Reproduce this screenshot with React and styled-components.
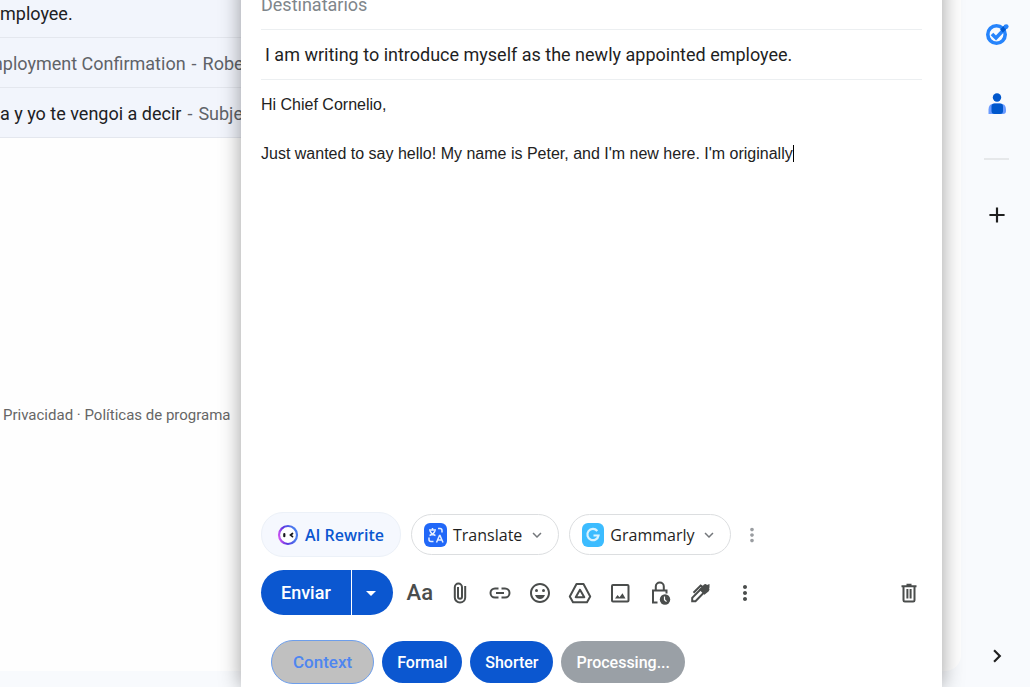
import React from "react";
import styled, { createGlobalStyle, css } from "styled-components";
import { MdArrowDropDown, MdMoreVert, MdAdd, MdChevronRight, MdOutlineEmojiEmotions, MdExpandMore } from "react-icons/md";

const Global = createGlobalStyle`
  *, *::before, *::after { box-sizing: border-box; }
  body {
    margin: 0;
    overflow: hidden;
    background: #f8fafd;
    font-family: Roboto, "Liberation Sans", sans-serif;
    color: #1f1f1f;
  }
  button { font: inherit; cursor: pointer; }
`;

const Page = styled.div`
  position: relative;
  display: grid;
  grid-template-columns: minmax(0, 1fr) 69px;
  height: 100vh;
  overflow: hidden;
`;

const Mailbox = styled.main`
  margin-bottom: 16px;
  background: #fefefe;
  border-bottom-right-radius: 16px;
  overflow: hidden;
`;

const MailList = styled.ul`
  list-style: none;
  margin: -12px 24px 0 0;
  padding: 0;
`;

const MailRow = styled.li`
  display: flex;
  align-items: center;
  height: 50px;
  padding-top: 2px;
  border-bottom: 1px solid #e4e7ee;
  background: #f2f5fc;
  white-space: pre;
  font-size: 18px;
  color: #5f6368;
  text-indent: ${(p) => (p.$clipped ? "-13px" : "0")};
`;

const MailSubject = styled.span`
  color: #202124;
`;

const Dash = styled.span`
  padding: 0 6px;
  text-indent: 0;
`;

const Snippet = styled.span`
  text-indent: 0;
`;

const Footer = styled.footer`
  margin-top: 265px;
  padding-left: 3px;
  font-size: 15px;
  line-height: 24px;
  color: #666;
  a { color: inherit; text-decoration: none; }
`;

const Rail = styled.aside`
  display: flex;
  flex-direction: column;
  align-items: center;
  padding: 21px 0 18px 2px;
`;

const RailButton = styled.button`
  display: grid;
  place-items: center;
  width: 26px;
  height: 26px;
  padding: 0;
  border: 0;
  background: none;
  color: #1f1f1f;
  margin-top: ${(p) => p.$gap || 0}px;
`;

const RailRule = styled.hr`
  width: 25px;
  height: 2px;
  margin: 41px 0 0;
  border: 0;
  background: #e6e8ea;
`;

const RailSpacer = styled.div`
  flex: 1;
`;

const Compose = styled.section`
  position: absolute;
  top: -20px;
  bottom: 0;
  right: 88px;
  left: 241px;
  display: flex;
  flex-direction: column;
  padding: 0 20px 3px;
  background: #fff;
  box-shadow: 0 0 20px rgba(0, 0, 0, 0.38);
`;

const Field = styled.input`
  flex: none;
  height: 50px;
  padding: 0 0 0 ${(p) => (p.$inset ? 4 : 0)}px;
  border: 0;
  border-bottom: 1px solid #eceff1;
  outline: 0;
  background: none;
  font: inherit;
  font-size: 18px;
  color: #1f1f1f;
  &::placeholder { color: #80868b; opacity: 1; }
`;

const Body = styled.div`
  flex: 1;
  padding-top: 13px;
  outline: 0;
  font-family: "Liberation Sans", Arial, sans-serif;
  font-size: 16px;
  line-height: 24px;
  color: #222;
  p { margin: 0 0 25px; }
`;

const Caret = styled.span`
  border-left: 1px solid #000;
`;

const AiBar = styled.div`
  display: flex;
  align-items: center;
  gap: 10px;
  margin-bottom: 13px;
  color: #9a9da1;
`;

const AiButton = styled.button`
  display: flex;
  align-items: center;
  gap: 6px;
  height: 41px;
  padding: 0 12px;
  border: 1px solid #dcdee0;
  border-radius: 22px;
  background: #fff;
  font-family: "Open Sans", "Noto Sans", sans-serif;
  font-size: 16px;
  color: #1f1f1f;
  ${(p) =>
    p.$primary &&
    css`
      height: 45px;
      padding: 0 16px 0 15px;
      border: 1px solid #ecf1f8;
      background: #f5f8fe;
      color: #0b57d0;
      font-weight: 600;
    `}
`;

const Toolbar = styled.div`
  display: flex;
  align-items: center;
  margin-bottom: 25px;
`;

const SendGroup = styled.div`
  display: flex;
  gap: 1px;
  margin-right: 12px;
`;

const SendButton = styled.button`
  display: grid;
  place-items: center;
  height: 45px;
  padding: 0 20px;
  border: 0;
  border-radius: 23px 0 0 23px;
  background: #0b57d0;
  color: #fff;
  font-size: 18px;
  font-weight: 500;
`;

const SendOptions = styled(SendButton)`
  width: 41px;
  padding: 0 2px 0 0;
  border-radius: 0 23px 23px 0;
`;

const ToolButton = styled.button`
  display: grid;
  place-items: center;
  width: 30px;
  height: 30px;
  margin-right: 10px;
  padding: 0;
  border: 0;
  background: none;
  color: #4a4d4c;
  font-size: 22px;
  font-weight: 500;
  &:last-child {
    width: 26px;
    margin: 0 0 0 auto;
  }
`;

const ToolGap = styled.span`
  width: 5px;
`;

const Chips = styled.div`
  display: flex;
  align-items: center;
  gap: 8px;
  padding-left: 10px;
`;

const chipTones = {
  solid: css`background: #0b57d0; color: #fff;`,
  busy: css`background: #9aa0a6; color: #fff;`,
  outline: css`
    height: 44px;
    padding: 0 21px;
    border: 1px solid #6d9eeb;
    background: #c0c0c0;
    color: #4e86f0;
    font-size: 17px;
  `,
};

const Chip = styled.button`
  height: 42px;
  padding: 0 15px;
  border: 0;
  border-radius: 22px;
  font-size: 16px;
  font-weight: 500;
  ${(p) => chipTones[p.$tone]}
`;

const stroke = { fill: "none", stroke: "currentColor", strokeWidth: 2 };

const TasksIcon = () => (
  <svg width="24" height="24" viewBox="0 0 24 24" fill="none">
    <circle cx="11.500" cy="12.500" r="8.700" stroke="#2684fc" strokeWidth="3.600" />
    <path d="M7 12l4 4 8.500-9" stroke="#2684fc" strokeWidth="3.600" />
    <path d="M16.500 9l4.500-4.500" stroke="#0057cc" strokeWidth="4" />
    <circle cx="21.200" cy="4.600" r="2.400" fill="#2684fc" />
  </svg>
);

const ContactsIcon = () => (
  <svg width="24" height="24" viewBox="0 0 24 24">
    <circle cx="12" cy="5.500" r="4.200" fill="#0057cc" />
    <path d="M3.500 22v-4.500q0-6 6-6H15q6 0 6 6V19q0 3-3 3z" fill="#6a9bff" />
    <path d="M6.500 19v-4.500q0-3 3-3H15q3 0 3 3V19q0 3-3 3H9.500q-3 0-3-3z" fill="#0057cc" />
  </svg>
);

const RobotIcon = () => (
  <svg width="22" height="22" viewBox="0 0 22 22">
    <defs>
      <linearGradient id="ring" x1="0" y1="0.800" x2="0.900" y2="0.600">
        <stop offset="0" stopColor="#d85af5" />
        <stop offset="0.400" stopColor="#5b34e0" />
        <stop offset="1" stopColor="#4a7cee" />
      </linearGradient>
    </defs>
    <circle cx="11" cy="11" r="9" fill="#fff" stroke="url(#ring)" strokeWidth="2.200" />
    <path d="M7.300 10v2.200" stroke="#17171c" strokeWidth="2.200" strokeLinecap="round" />
    <path d="M15.500 9.500l-2 1.600 2 1.600" fill="none" stroke="#17171c" strokeWidth="1.700" strokeLinecap="round" />
  </svg>
);

const TranslateIcon = () => (
  <svg width="23" height="24" viewBox="0 0 23 24" fill="none" stroke="#e4eeff" strokeWidth="1.500">
    <rect width="23" height="24" rx="6" fill="#2168f8" stroke="none" />
    <path d="M5 7h7M8.500 5v2M6 8c1 2.500 3 4 5.500 4.500M11 8c-1 2.500-3 4-5.500 4.500" />
    <path d="M14 5.500h2q2 0 2 2v2M5 14.500v2q0 2 2 2h2.500" />
    <path d="M12.500 19.500l3-7h.5l3 7M13.500 17h4.500" />
  </svg>
);

const GrammarlyIcon = () => (
  <svg width="22" height="24" viewBox="0 0 22 24" fill="none" stroke="#d9f3ff" strokeWidth="2.200">
    <rect width="22" height="24" rx="6" fill="#3cbcff" stroke="none" />
    <path d="M15.300 8A5.600 5.600 0 1 0 16.500 12.500H11.500" />
  </svg>
);

const ClipIcon = () => (
  <svg width="24" height="24" viewBox="0 0 24 24" {...stroke}>
    <path d="M17.200 5v11.500a5.200 5 0 0 1-10.400 0V6.200a3.600 3.600 0 0 1 7.200 0v9.500a2 2 0 0 1-4 0V6" />
  </svg>
);

const LinkIcon = () => (
  <svg width="24" height="24" viewBox="0 0 24 24" {...stroke}>
    <path d="M10.500 7.500H7a4.500 4.500 0 0 0 0 9h3.500M13.500 7.500H17a4.500 4.500 0 0 1 0 9h-3.500M8 12h8" />
  </svg>
);

const DriveIcon = () => (
  <svg width="24" height="24" viewBox="0 0 24 24" {...stroke} strokeLinejoin="round">
    <path d="M8.500 3h7L22.200 15.500l-3.200 5.800H5L1.800 15.500z" />
    <path d="M12 8.700l-4.300 7.500h8.600z" />
  </svg>
);

const ImageIcon = () => (
  <svg width="24" height="24" viewBox="0 0 24 24" {...stroke}>
    <rect x="4" y="4" width="16.500" height="16.500" rx="1" />
    <path d="M7 17.500l2.500-3.500 2 2.200 3-4 3 5.300z" fill="currentColor" stroke="none" />
  </svg>
);

const LockIcon = () => (
  <svg width="24" height="26" viewBox="0 0 24 26" {...stroke}>
    <path d="M9.500 22.500H5V10.500h13.500v3M7.800 10.500V6.500a4 4 0 0 1 8 0v4" />
    <circle cx="17" cy="19.500" r="5.200" fill="currentColor" stroke="none" />
    <path d="M16.500 16.500v3.200l2 2" stroke="#fff" strokeWidth="1.200" />
  </svg>
);

const PenIcon = () => (
  <svg width="24" height="24" viewBox="0 0 24 24" {...stroke}>
    <path d="M4.200 20.200v-3.400L13 8l3.200 3.200L7.500 20.200z" />
    <path d="M12.500 8.500l4-4q.8-.8 1.600 0l.7.700 1.700-.7v1.700l-.4 1.600q.8.800 0 1.600l-3.600 3z" fill="currentColor" />
    <path d="M5.500 11.800l7.200-7.200 2.500 1.800" />
  </svg>
);

const TrashIcon = () => (
  <svg width="24" height="24" viewBox="0 0 24 24" {...stroke}>
    <path d="M4.500 5.200h15M9.500 3.800h5" />
    <path d="M6.500 5v14.200q0 1.300 1.300 1.300h8.400q1.300 0 1.300-1.300V5" />
    <path d="M10.400 8v9.500M13.600 8v9.500" />
  </svg>
);

const tools = [
  ["Formato", "Aa"],
  ["Adjuntar archivos", <ClipIcon />],
  ["Insertar enlace", <LinkIcon />],
  ["Insertar emoji", <MdOutlineEmojiEmotions size={24} />],
  ["Insertar con Drive", <DriveIcon />],
  ["Insertar foto", <ImageIcon />],
  ["Modo confidencial", <LockIcon />],
  ["Insertar firma", <PenIcon />],
];

export default function App() {
  return (
    <Page>
      <Global />
      <Mailbox>
        <MailList>
          <MailRow><MailSubject>mployee.</MailSubject></MailRow>
          <MailRow $clipped>
            <span>mployment Confirmation</span><Dash>-</Dash><Snippet>Robe</Snippet>
          </MailRow>
          <MailRow>
            <MailSubject>a y yo te vengoi a decir</MailSubject><Dash>-</Dash><Snippet>Subje</Snippet>
          </MailRow>
        </MailList>
        <Footer>
          <a href="#privacidad">Privacidad</a> · <a href="#politicas">Políticas de programa</a>
        </Footer>
      </Mailbox>
      <Rail>
        <RailButton aria-label="Tasks"><TasksIcon /></RailButton>
        <RailButton aria-label="Contactos" $gap={44}><ContactsIcon /></RailButton>
        <RailRule />
        <RailButton aria-label="Complementos" $gap={42}><MdAdd size={26} /></RailButton>
        <RailSpacer />
        <RailButton aria-label="Ocultar panel"><MdChevronRight size={26} /></RailButton>
      </Rail>
      <Compose>
        <Field aria-label="Destinatarios" placeholder="Destinatarios" />
        <Field
          $inset
          aria-label="Asunto"
          defaultValue="I am writing to introduce myself as the newly appointed employee."
        />
        <Body role="textbox" aria-multiline="true" aria-label="Cuerpo del mensaje" contentEditable suppressContentEditableWarning>
          <p>Hi Chief Cornelio,</p>
          <p>Just wanted to say hello! My name is Peter, and I'm new here. I'm originally<Caret /></p>
        </Body>
        <AiBar>
          <AiButton $primary><RobotIcon />AI Rewrite</AiButton>
          <AiButton><TranslateIcon />Translate<MdExpandMore size={18} color="#74777b" /></AiButton>
          <AiButton><GrammarlyIcon />Grammarly<MdExpandMore size={18} color="#74777b" /></AiButton>
          <MdMoreVert size={22} />
        </AiBar>
        <Toolbar>
          <SendGroup>
            <SendButton>Enviar</SendButton>
            <SendOptions aria-label="Más opciones de envío"><MdArrowDropDown size={24} /></SendOptions>
          </SendGroup>
          {tools.map(([label, icon]) => (
            <ToolButton key={label} aria-label={label}>{icon}</ToolButton>
          ))}
          <ToolGap />
          <ToolButton aria-label="Más opciones"><MdMoreVert size={24} /></ToolButton>
          <ToolButton aria-label="Descartar borrador"><TrashIcon /></ToolButton>
        </Toolbar>
        <Chips>
          <Chip $tone="outline">Context</Chip>
          <Chip $tone="solid">Formal</Chip>
          <Chip $tone="solid">Shorter</Chip>
          <Chip $tone="busy">Processing...</Chip>
        </Chips>
      </Compose>
    </Page>
  );
}
